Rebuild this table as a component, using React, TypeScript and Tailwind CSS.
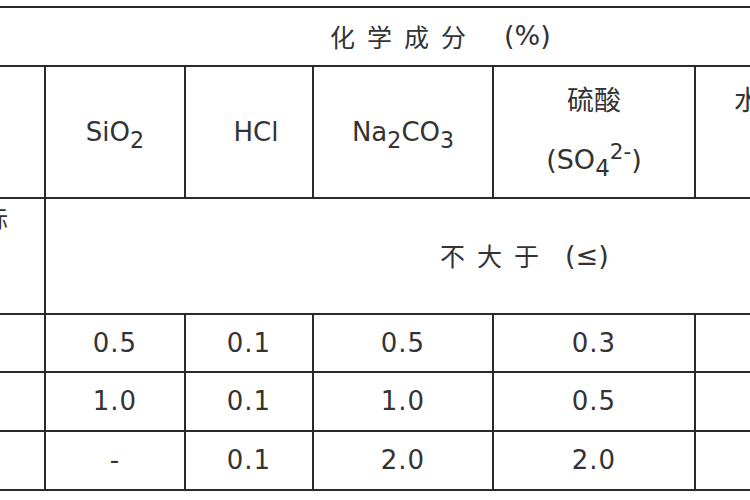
import React from "react";

const lat = "font-['DejaVu_Sans','Verdana',sans-serif]";
const cjk = "font-['Noto_Sans_CJK_SC','Noto_Sans',sans-serif]";

function Sub({ children }: { children: React.ReactNode }) {
  return <span className="relative top-[0.32em] text-[0.85em]">{children}</span>;
}

function Sup({ children }: { children: React.ReactNode }) {
  return <span className="relative top-[-0.45em] text-[0.8em]">{children}</span>;
}

const rows = [
  ["0.5", "0.1", "0.5", "0.3"],
  ["1.0", "0.1", "1.0", "0.5"],
  ["-", "0.1", "2.0", "2.0"],
];

export default function App() {
  const cell = "bg-white flex items-center justify-center";
  return (
    <div className="w-[750px] h-[500px] overflow-hidden bg-white text-[#333333]">
      <div className="mt-[6px] ml-[-56px] w-[902px] bg-[#2a2a2a] py-[2px] grid grid-cols-[100px_138px_126px_178px_200px_150px] grid-rows-[57px_130px_114px_56px_57px_57px] gap-[2px]">
        {/* top header */}
        <div className={`col-span-6 bg-white flex items-center pl-[386px] ${cjk}`}>
          <span className="text-[25px] tracking-[12px]">化学成分</span>
          <span className={`ml-[26px] text-[27px] ${lat}`}>(%)</span>
        </div>

        {/* formula row */}
        <div className="bg-white" />
        <div className={`${cell} ${lat} text-[26px]`}>
          <span>
            SiO<Sub>2</Sub>
          </span>
        </div>
        <div className={`${cell} ${lat} text-[26px] pl-[14px]`}>HCl</div>
        <div className={`${cell} ${lat} text-[26px]`}>
          <span>
            Na<Sub>2</Sub>CO<Sub>3</Sub>
          </span>
        </div>
        <div className="bg-white flex flex-col items-center pt-[16px] gap-[30px]">
          <span className={`${cjk} text-[27px] leading-[32px]`}>硫酸</span>
          <span className={`${lat} text-[27px] leading-[30px]`}>
            (SO<Sub>4</Sub>
            <Sup>2-</Sup>)
          </span>
        </div>
        <div className="bg-white pl-[38px] pt-[16px]">
          <span className={`${cjk} text-[27px] leading-[32px] whitespace-nowrap`}>水不溶物</span>
        </div>

        {/* not greater than row */}
        <div className={`bg-white flex justify-end pr-[36px] pt-[4px] ${cjk}`}>
          <span className="text-[24px] leading-[30px] whitespace-nowrap">指标</span>
        </div>
        <div className={`col-span-5 bg-white flex items-center pl-[394px] ${cjk}`}>
          <span className="text-[25px] tracking-[12px]">不大于</span>
          <span className={`ml-[14px] text-[27px] ${lat}`}>(≤)</span>
        </div>

        {/* data rows */}
        {rows.map((r, i) => (
          <React.Fragment key={i}>
            <div className="bg-white" />
            {r.map((v, j) => (
              <div key={j} className={`${cell} ${lat} text-[26px] tracking-[1px]`}>
                {v}
              </div>
            ))}
            <div className="bg-white" />
          </React.Fragment>
        ))}
      </div>
    </div>
  );
}
